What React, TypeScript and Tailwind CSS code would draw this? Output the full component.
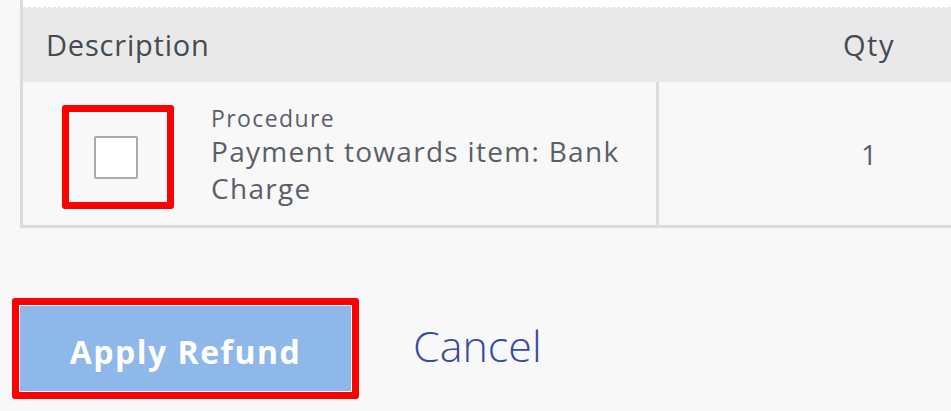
export default function App() {
    return (
        <div className="w-[951px] h-[411px] overflow-hidden bg-[#f8f8f8] font-['Open_Sans',sans-serif]">
            {/* Table */}
            <div className="ml-[20px] w-[1100px] border-l-[3px] border-[#dcdcdc]">
                <div className="h-[8px] bg-white border-b border-dashed border-[#e4e4e4]" />
                <div className="flex h-[74px] items-center bg-[#e9e9e9] text-[#454a52]">
                    <div className="w-[636px] pl-[23px] text-[29px] tracking-[0.8px]">Description</div>
                    <div className="w-[420px] text-center text-[29px] tracking-[1.5px]">Qty</div>
                </div>
                <div className="flex h-[146px] border-b-[3px] border-[#dcdcdc] bg-[#f8f8f8]">
                    <div className="flex w-[636px] border-r-[3px] border-[#dcdcdc]">
                        <div className="ml-[39px] mt-[23px] flex h-[104px] w-[112px] items-center justify-center rounded-[3px] border-[7px] border-[#ff0000]">
                            <div className="mr-[4px] h-[43px] w-[44px] rounded-[2px] border-2 border-[#ababab] bg-white" />
                        </div>
                        <div className="ml-[37px] mt-[21px] text-[#5a5f68]">
                            <div className="text-[23px] leading-[30px] tracking-[1.4px]">Procedure</div>
                            <div className="w-[430px] text-[28px] leading-[37px] tracking-[1.3px]">
                                Payment towards item: Bank Charge
                            </div>
                        </div>
                    </div>
                    <div className="flex w-[420px] items-center justify-center text-[28px] text-[#5a5f68]">1</div>
                </div>
            </div>

            {/* Actions */}
            <div className="mt-[70px] ml-[12px] flex items-center">
                <div className="rounded-[3px] border-[7px] border-[#ff0000] p-[1px]">
                    <button className="h-[85px] w-[331px] pt-[6px] bg-[#8fb8ea] text-[32px] font-bold tracking-[1.5px] text-white">
                        Apply Refund
                    </button>
                </div>
                <button className="ml-[54px] -mt-[4px] text-[43px] font-light text-[#3a4a9c]">Cancel</button>
            </div>
        </div>
    );
}
